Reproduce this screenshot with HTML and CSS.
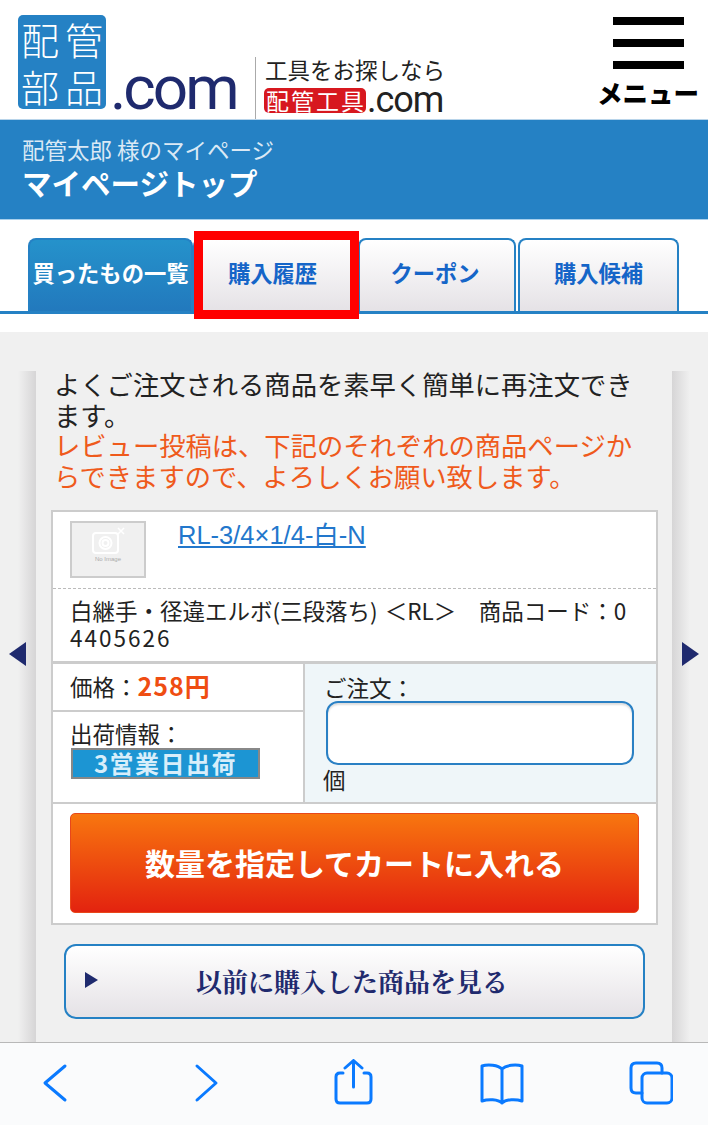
FILE: index.html
```html
<!DOCTYPE html>
<html lang="ja">
<head>
    <meta charset="UTF-8">
    <meta name="viewport" content="width=device-width, initial-scale=1.0">
    <title>マイページトップ</title>
    <link rel="stylesheet" href="styles.css">
</head>
<body>
<div class="page">
    <header class="site-header">
        <div class="logo">
            <div class="logo-box"><span>配</span><span>管</span><span>部</span><span>品</span></div>
            <span class="logo-com">.com</span>
        </div>
        <div class="sister">
            <p class="sister-lead">工具をお探しなら</p>
            <p class="sister-name"><span class="sister-badge">配管工具</span><span class="sister-com">.com</span></p>
        </div>
        <div class="menu">
            <div class="menu-bars"><i></i><i></i><i></i></div>
            <span class="menu-label">メニュー</span>
        </div>
    </header>

    <div class="band">
        <p class="band-user">配管太郎 様のマイページ</p>
        <h1 class="band-title">マイページトップ</h1>
    </div>

    <nav class="tabs">
        <a class="tab active">買ったもの一覧</a>
        <a class="tab marked">購入履歴<span class="marker"></span></a>
        <a class="tab coupon">クーポン</a>
        <a class="tab later">購入候補</a>
    </nav>

    <main class="content">
        <div class="side side-left">
            <svg class="side-arrow" width="18" height="26" viewBox="0 0 18 26"><path d="M17 1V25L0 13Z" fill="#1f2a6e"/></svg>
        </div>
        <div class="panel">
            <p class="intro">よくご注文される商品を素早く簡単に再注文できます。<br><span class="notice">レビュー投稿は、下記のそれぞれの商品ページからできますので、よろしくお願い致します。</span></p>

            <section class="card">
                <div class="item-head">
                    <div class="noimage">
                        <svg width="34" height="28" viewBox="0 0 34 28" fill="none" stroke="#fff" stroke-width="2">
                            <rect x="2" y="6" width="25" height="20" rx="3"/>
                            <circle cx="14.500" cy="16" r="6"/>
                            <circle cx="14.500" cy="16" r="3"/>
                            <path d="M27 1L33 7M33 1L27 7" stroke-width="1.500"/>
                        </svg>
                        <span>No Image</span>
                    </div>
                    <a class="item-link">RL-3/4×1/4-白-N</a>
                </div>
                <p class="item-desc">白継手・径違エルボ(三段落ち) ＜RL＞　商品コード：<span class="item-code">04405626</span></p>
                <div class="order">
                    <div class="order-left">
                        <div class="price">価格：<strong>258円</strong></div>
                        <div class="ship">
                            <span>出荷情報：</span>
                            <span class="ship-badge">3営業日出荷</span>
                        </div>
                    </div>
                    <div class="order-right">
                        <label class="qty-label">ご注文：</label>
                        <input class="qty" type="text">
                        <span class="qty-unit">個</span>
                    </div>
                </div>
                <div class="cart-row">
                    <button class="cart-btn">数量を指定してカートに入れる</button>
                </div>
            </section>

            <button class="history-btn">
                <svg width="13" height="16" viewBox="0 0 13 16"><path d="M0 0L13 8L0 16Z" fill="#1f2a6e"/></svg>
                <span>以前に購入した商品を見る</span>
            </button>
        </div>
        <div class="side side-right">
            <svg class="side-arrow" width="18" height="26" viewBox="0 0 18 26"><path d="M1 1V25L18 13Z" fill="#1f2a6e"/></svg>
        </div>
    </main>

    <footer class="toolbar">
        <svg width="44" height="50" viewBox="0 0 44 50"><path d="M32 7L12 24L32 41"/></svg>
        <svg width="44" height="50" viewBox="0 0 44 50"><path d="M15 7L34 24L15 41"/></svg>
        <svg width="44" height="50" viewBox="0 0 44 50"><path d="M12 14H9Q5 14 5 18V40Q5 44 9 44H36Q40 44 40 40V18Q40 14 36 14H33M22.500 28V2M14 9L22.500 1.500L31 9"/></svg>
        <svg width="44" height="50" viewBox="0 0 44 50"><path d="M22 10C18 6 8 5 2 7V42C8 40 18 40 22 44C26 40 36 40 42 42V7C36 5 26 6 22 10ZM22 10V44"/></svg>
        <svg width="44" height="50" viewBox="0 0 44 50"><path d="M13 34H7Q2 34 2 29V9Q2 4 7 4H28Q33 4 33 9V14"/><rect x="13" y="14" width="30" height="30" rx="5"/></svg>
    </footer>
</div>
</body>
</html>
```

FILE: styles.css
```css
* {
    box-sizing: border-box;
}
body {
    margin: 0;
    font-family: "Noto Sans CJK JP", "Liberation Sans", sans-serif;
    color: #222;
}
p, h1 {
    margin: 0;
}
.page {
    display: flex;
    flex-direction: column;
    width: 708px;
    height: 1125px;
    overflow: hidden;
    background-color: #fff;
}

/* header */
.site-header {
    display: flex;
    height: 120px;
    flex-shrink: 0;
    border-bottom: 1px solid #b8d4ea;
    padding-left: 18px;
}
.logo {
    display: flex;
    align-items: flex-end;
    flex-shrink: 0;
    width: 237px;
    height: 94px;
    margin-top: 15px;
}
.logo-box {
    display: grid;
    grid-template-columns: 44px 44px;
    flex-shrink: 0;
    width: 88px;
    height: 94px;
    padding-top: 1px;
    background-color: #2581c4;
    border-radius: 5px;
    color: #fff;
    font-size: 38px;
    font-weight: 300;
    line-height: 46px;
    text-align: center;
}
.logo-com {
    margin-left: 4px;
    margin-bottom: -11px;
    color: #1f2a6e;
    font-family: Roboto, sans-serif;
    font-size: 62px;
    line-height: 64px;
    letter-spacing: -3px;
    white-space: nowrap;
}
.sister {
    width: 190px;
    height: 62px;
    margin-top: 57px;
    padding-left: 9px;
    border-left: 1px solid #aaa;
}
.sister-lead {
    font-size: 22.500px;
    line-height: 24px;
    white-space: nowrap;
}
.sister-name {
    display: flex;
    align-items: center;
    margin-top: 7px;
    margin-left: -1px;
}
.sister-badge {
    width: 102px;
    height: 25px;
    padding-left: 2px;
    background-color: #d7181f;
    border-radius: 5px;
    color: #fff;
    font-size: 23px;
    line-height: 25px;
    letter-spacing: 2px;
    white-space: nowrap;
}
.sister-com {
    margin-left: 1px;
    font-family: Roboto, sans-serif;
    font-size: 36px;
    line-height: 25px;
    letter-spacing: -1px;
}
.menu {
    display: flex;
    flex-direction: column;
    align-items: center;
    width: 100px;
    margin-left: auto;
    margin-right: 10px;
    padding-top: 17px;
}
.menu-bars {
    display: flex;
    flex-direction: column;
    gap: 14px;
    width: 71px;
}
.menu-bars i {
    display: block;
    height: 8px;
    background-color: #000;
}
.menu-label {
    margin-top: 9px;
    color: #000;
    font-size: 25.500px;
    font-weight: 900;
    line-height: 28px;
    white-space: nowrap;
}

/* blue band */
.band {
    flex-shrink: 0;
    height: 100px;
    padding: 14px 22px 0;
    background-color: #2581c4;
    border-bottom: 1px solid #a9d0ec;
}
.band-user {
    color: #dbe9f5;
    font-size: 22.500px;
    line-height: 30px;
}
.band-title {
    color: #fff;
    font-size: 29.500px;
    font-weight: 700;
    line-height: 36px;
}

/* tabs */
.tabs {
    display: flex;
    flex-shrink: 0;
    height: 112px;
    padding: 18px 0 0 28px;
    background: linear-gradient(#2581c4, #2581c4) 0 91px / 100% 3px no-repeat #fff;
}
.tab {
    display: flex;
    align-items: center;
    justify-content: center;
    height: 73px;
    padding-bottom: 7px;
    background: linear-gradient(#fff, #e5e2e6);
    border: 2px solid #2581c4;
    border-bottom: none;
    border-radius: 8px 8px 0 0;
    color: #1565c8;
    font-size: 22.300px;
    font-weight: 700;
    white-space: nowrap;
}
.tab.active {
    width: 165px;
    background: linear-gradient(#2592cb, #2279bd);
    color: #fff;
}
.tab.marked {
    position: relative;
    width: 165px;
    padding-right: 6px;
}
.tab.coupon {
    width: 158px;
    margin-right: 2px;
    padding-right: 4px;
}
.tab.later {
    width: 161px;
}
.marker {
    position: absolute;
    left: -1px;
    right: -3px;
    top: -9px;
    bottom: -8px;
    border: 9px solid #f00;
}

/* main */
.content {
    flex: 1;
    display: grid;
    grid-template-columns: 36px 636px 36px;
    min-height: 0;
    padding-top: 39px;
    background-color: #f0f0f0;
    overflow: hidden;
}
.side {
    display: flex;
    align-items: flex-start;
    padding-top: 270px;
}
.side-left {
    justify-content: flex-start;
    padding-left: 9px;
    background: linear-gradient(to right, #f0f0f0 50%, #d6d5d6);
}
.side-right {
    justify-content: flex-end;
    padding-right: 9px;
    background: linear-gradient(to left, #f0f0f0 50%, #d6d5d6);
}
.panel {
    min-height: 0;
}
.intro {
    margin-top: -2px;
    padding: 0 18px;
    font-size: 26.300px;
    line-height: 30.500px;
    word-break: break-all;
}
.notice {
    color: #ef5a1c;
}

/* product card */
.card {
    width: 607px;
    margin: 19px 0 0 15px;
    background-color: #fff;
    border: 2px solid #ccc;
}
.item-head {
    display: flex;
    align-items: flex-start;
    height: 77px;
    padding: 9px 0 0 17px;
    border-bottom: 1px dashed #bbb;
}
.noimage {
    display: flex;
    flex-direction: column;
    align-items: center;
    width: 76px;
    height: 57px;
    padding-top: 4px;
    background-color: #f0f0f0;
    border: 2px solid #ccc;
    color: #aaa;
    font-family: "Liberation Sans", sans-serif;
    font-size: 6px;
    line-height: 9px;
}
.item-link {
    margin-left: 32px;
    color: #2277cc;
    font-family: "Liberation Sans", "Noto Sans CJK JP", sans-serif;
    font-size: 25.500px;
    line-height: 28px;
    text-decoration: underline;
    white-space: nowrap;
}
.item-desc {
    height: 72px;
    padding: 8px 22px 0 17px;
    font-size: 22.500px;
    line-height: 27px;
    word-spacing: 2px;
    word-break: break-all;
}
.item-code {
    letter-spacing: 2px;
}
.order {
    display: grid;
    grid-template-columns: 252px 1fr;
    border-top: 3px solid #ccc;
    border-bottom: 2px solid #ccc;
}
.order-left {
    border-right: 2px solid #ccc;
}
.price {
    height: 48px;
    padding-left: 17px;
    border-bottom: 2px solid #ccc;
    font-size: 22.500px;
    line-height: 42px;
}
.price strong {
    color: #ef4d12;
    font-size: 25px;
    font-weight: 700;
    letter-spacing: 1px;
}
.ship {
    display: flex;
    flex-direction: column;
    align-items: flex-start;
    height: 90px;
    padding: 8px 0 0 17px;
    font-size: 22.500px;
    line-height: 27px;
}
.ship-badge {
    width: 189px;
    height: 31px;
    margin-top: 1px;
    margin-left: 1px;
    background-color: #1c95d3;
    border: 2px solid #888;
    color: #d8eefa;
    font-size: 24px;
    font-weight: 700;
    line-height: 25px;
    letter-spacing: 1.500px;
    text-align: center;
}
.order-right {
    display: flex;
    flex-direction: column;
    align-items: flex-start;
    padding: 9px 0 0 19px;
    background-color: #eff6f9;
    font-size: 22.500px;
    line-height: 28px;
}
.qty {
    width: 308px;
    height: 64px;
    margin-left: 2px;
    background-color: #fff;
    border: 2px solid #2a80c4;
    border-radius: 12px;
    box-shadow: inset 0 2px 2px #ddd;
    outline: none;
}
.qty-unit {
    margin-left: -1px;
}
.cart-row {
    height: 119px;
    padding: 9px 17px;
}
.cart-btn {
    display: block;
    width: 569px;
    height: 100px;
    padding: 0 0 3px;
    background: linear-gradient(#f8760f, #e3230f);
    border: 1px solid #e8471a;
    border-radius: 5px;
    color: #fff;
    font-family: inherit;
    font-size: 30px;
    font-weight: 700;
}
.history-btn {
    display: flex;
    align-items: center;
    width: 581px;
    height: 75px;
    margin: 19px 0 0 28px;
    padding: 0 0 3px 19px;
    background: linear-gradient(#fff, #e5e2e6);
    border: 2px solid #2581c4;
    border-radius: 12px;
    color: #1f2a6e;
    font-family: "Noto Serif CJK JP", "Noto Sans CJK JP", serif;
    font-size: 26px;
    font-weight: 700;
}
.history-btn span {
    margin-left: 98px;
}

/* browser bar */
.toolbar {
    display: flex;
    align-items: center;
    gap: 105px;
    flex-shrink: 0;
    height: 83px;
    padding: 0 0 0 33px;
    background-color: #fafbfc;
    border-top: 1px solid #b8b8b8;
}
.toolbar svg {
    flex-shrink: 0;
    fill: none;
    stroke: #0a7aff;
    stroke-width: 3;
    stroke-linecap: round;
    stroke-linejoin: round;
}
```
